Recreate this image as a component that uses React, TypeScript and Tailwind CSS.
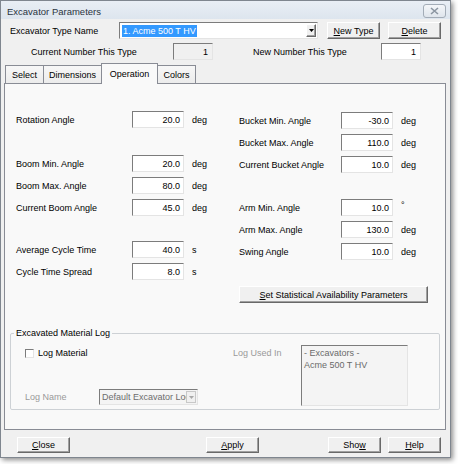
import React from 'react';

// classic 3D edges
const sunken = 'border border-t-[#7c7c7c] border-l-[#7c7c7c] border-b-[#e4e4e4] border-r-[#e4e4e4]';
const raised = 'border border-t-white border-l-white border-b-[#696969] border-r-[#696969] shadow-[inset_-1px_-1px_0_#a0a0a0]';

function Btn({ children, className = '' }: { children: React.ReactNode; className?: string }) {
  return (
    <div className={`${raised} bg-[#f0f0f0] flex items-center justify-center ${className}`}>
      {children}
    </div>
  );
}

function Field({
  label,
  value,
  unit,
  labelW,
  className = '',
}: {
  label: string;
  value: string;
  unit: string;
  labelW: string;
  className?: string;
}) {
  return (
    <div className={`flex items-center h-[17px] ${className}`}>
      <span className={labelW}>{label}</span>
      <div className={`${sunken} bg-white w-[52px] h-[17px] flex items-center justify-end pr-[3px]`}>
        {value}
      </div>
      <span className={unit === '°' ? 'ml-[8px] self-start leading-[12px]' : 'ml-[8px]'}>{unit}</span>
    </div>
  );
}

function Tab({ label, active = false, className = '' }: { label: string; active?: boolean; className?: string }) {
  return (
    <div
      className={
        active
          ? `relative z-10 h-[21px] -mb-px bg-[#f9f9f9] border border-b-0 border-[#898c95] flex items-center justify-center ${className}`
          : `h-[18px] bg-gradient-to-b from-[#f7f7f7] to-[#ececec] border border-b-0 border-[#898c95] flex items-center justify-center ${className}`
      }
    >
      {label}
    </div>
  );
}

function Arrow({ color }: { color: string }) {
  return (
    <svg width="5" height="3" viewBox="0 0 5 3">
      <path d="M0 0h5L2.5 3z" fill={color} />
    </svg>
  );
}

export default function App() {
  return (
    <div className="w-[458px] h-[464px] bg-white font-['Liberation_Sans',Arial,sans-serif] text-[9px] leading-[12px] text-black">
      <div className="w-[451px] h-[458px] border border-[#7f868f] bg-[#f0f0f0] shadow-[2px_2px_5px_rgba(0,0,0,0.45)] flex flex-col">
        {/* Title bar */}
        <div className="h-[18px] bg-gradient-to-b from-[#e9eef5] to-[#dde5ee] flex items-start justify-between pl-[6px] pr-[3px]">
          <span className="mt-[5px] text-[9.5px] text-[#2a3440]">Excavator Parameters</span>
          <div className="mt-[3px] mr-[1px] w-[23px] h-[14px] rounded-[3px] border border-[#a3acb7] bg-gradient-to-b from-[#f4f6f9] to-[#dfe5ec] flex items-center justify-center">
            <svg width="9" height="8" viewBox="0 0 9 8">
              <path d="M1 1l7 6M8 1L1 7" stroke="#8b95a1" strokeWidth="1.6" />
            </svg>
          </div>
        </div>

        {/* Type row */}
        <div className="mt-[3px] h-[17px] flex items-center pl-[9px]">
          <span className="w-[109px]">Excavator Type Name</span>
          <div className={`${sunken} bg-white w-[199px] h-[17px] flex items-center pl-[2px] pr-[1px]`}>
            <div className="flex-1 flex items-center">
              <span className="bg-[#3399ff] text-white px-[1px] h-[12px] leading-[12px]">1. Acme 500 T HV</span>
            </div>
            <div className={`${raised} bg-[#f0f0f0] w-[10px] h-[13px] flex items-center justify-center`}>
              <Arrow color="#000" />
            </div>
          </div>
          <Btn className="ml-[9px] w-[53px] h-[17px]">
            <span><span className="underline">N</span>ew Type</span>
          </Btn>
          <Btn className="ml-[8px] w-[53px] h-[17px]">
            <span><span className="underline">D</span>elete</span>
          </Btn>
        </div>

        {/* Counts row */}
        <div className="mt-[4px] h-[17px] flex items-center pl-[30px]">
          <span className="w-[142px]">Current Number This Type</span>
          <div className={`${sunken} bg-[#f0f0f0] w-[40px] h-[17px] flex items-center justify-end pr-[4px]`}>1</div>
          <span className="ml-[40px] w-[128px]">New Number This Type</span>
          <div className={`${sunken} bg-white w-[40px] h-[17px] flex items-center justify-end pr-[4px]`}>1</div>
        </div>

        {/* Tabs */}
        <div className="mt-[3px] ml-[4px] h-[20px] flex items-end">
          <Tab label="Select" className="w-[39px]" />
          <Tab label="Dimensions" className="-ml-px w-[59px]" />
          <Tab label="Operation" active className="-ml-px w-[57px]" />
          <Tab label="Colors" className="-ml-px w-[39px]" />
        </div>

        {/* Tab panel */}
        <div className="ml-[3px] w-[442px] h-[347px] border border-[#898c95] bg-[#f9f9f9] flex flex-col">
          <div className="flex items-start">
            <div className="w-[234px] pl-[11px] flex flex-col">
              <Field className="mt-[27px]" labelW="w-[116px]" label="Rotation Angle" value="20.0" unit="deg" />
              <Field className="mt-[27px]" labelW="w-[116px]" label="Boom Min. Angle" value="20.0" unit="deg" />
              <Field className="mt-[5px]" labelW="w-[116px]" label="Boom Max. Angle" value="80.0" unit="deg" />
              <Field className="mt-[5px]" labelW="w-[116px]" label="Current Boom Angle" value="45.0" unit="deg" />
              <Field className="mt-[25px]" labelW="w-[116px]" label="Average Cycle Time" value="40.0" unit="s" />
              <Field className="mt-[5px]" labelW="w-[116px]" label="Cycle Time Spread" value="8.0" unit="s" />
            </div>
            <div className="flex flex-col">
              <Field className="mt-[28px]" labelW="w-[102px]" label="Bucket Min. Angle" value="-30.0" unit="deg" />
              <Field className="mt-[5px]" labelW="w-[102px]" label="Bucket Max. Angle" value="110.0" unit="deg" />
              <Field className="mt-[5px]" labelW="w-[102px]" label="Current Bucket Angle" value="10.0" unit="deg" />
              <Field className="mt-[26px]" labelW="w-[102px]" label="Arm Min. Angle" value="10.0" unit="°" />
              <Field className="mt-[5px]" labelW="w-[102px]" label="Arm Max. Angle" value="130.0" unit="deg" />
              <Field className="mt-[5px]" labelW="w-[102px]" label="Swing Angle" value="10.0" unit="deg" />
              <Btn className="mt-[26px] w-[189px] h-[17px]">
                <span><span className="underline">S</span>et Statistical Availability Parameters</span>
              </Btn>
            </div>
          </div>

          {/* Excavated Material Log group */}
          <fieldset className="mt-[24px] ml-[5px] w-[430px] border border-[#cdd1d5] rounded-[2px] pb-[3px] flex">
            <legend className="ml-[3px] px-[2px] leading-[12px]">Excavated Material Log</legend>
            <div className="flex items-start">
              <div className="w-[290px] flex flex-col">
                <div className="mt-[8px] h-[12px] flex items-center">
                  <div className="w-[222px] flex items-center pl-[14px]">
                    <div className={`${sunken} bg-white w-[9px] h-[9px]`} />
                    <span className="ml-[4px]">Log Material</span>
                  </div>
                  <span className="text-[#9a9a9a]">Log Used In</span>
                </div>
                <div className="mt-[30px] h-[16px] flex items-center">
                  <span className="w-[88px] pl-[14px] text-[#9a9a9a]">Log Name</span>
                  <div className={`${sunken} bg-[#f4f4f4] w-[99px] h-[16px] flex items-center pl-[2px] pr-[1px]`}>
                    <span className="flex-1 overflow-hidden whitespace-nowrap text-[#6d6d6d]">Default Excavator Log</span>
                    <div className="w-[10px] h-[12px] bg-[#f0f0f0] border border-[#c8c8c8] flex items-center justify-center">
                      <Arrow color="#a8a8a8" />
                    </div>
                  </div>
                </div>
              </div>
              <div className={`${sunken} mt-[6px] bg-[#f4f4f4] w-[107px] h-[61px] pl-[2px] pt-[1px] text-[#6a6a6a] flex flex-col`}>
                <span>- Excavators -</span>
                <span>Acme 500 T HV</span>
              </div>
            </div>
          </fieldset>
        </div>

        {/* Dialog buttons */}
        <div className="mt-[7px] h-[16px] flex items-center pl-[16px]">
          <Btn className="w-[53px] h-[16px]">
            <span><span className="underline">C</span>lose</span>
          </Btn>
          <Btn className="ml-[136px] w-[53px] h-[16px]">
            <span><span className="underline">A</span>pply</span>
          </Btn>
          <Btn className="ml-[69px] w-[53px] h-[16px]">
            <span>Sho<span className="underline">w</span></span>
          </Btn>
          <Btn className="ml-[7px] w-[53px] h-[16px]">
            <span><span className="underline">H</span>elp</span>
          </Btn>
        </div>
      </div>
    </div>
  );
}
